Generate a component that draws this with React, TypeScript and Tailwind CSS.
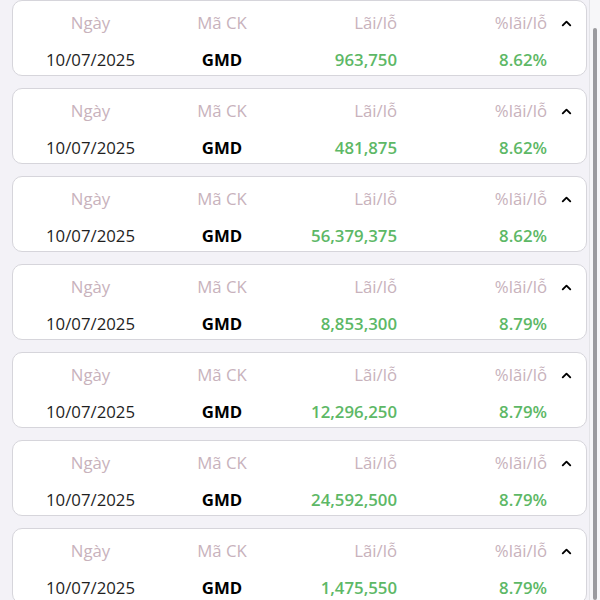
import React from 'react';
import { ChevronUp } from 'lucide-react';

const rows = [
  { date: '10/07/2025', code: 'GMD', pnl: '963,750', pct: '8.62%' },
  { date: '10/07/2025', code: 'GMD', pnl: '481,875', pct: '8.62%' },
  { date: '10/07/2025', code: 'GMD', pnl: '56,379,375', pct: '8.62%' },
  { date: '10/07/2025', code: 'GMD', pnl: '8,853,300', pct: '8.79%' },
  { date: '10/07/2025', code: 'GMD', pnl: '12,296,250', pct: '8.79%' },
  { date: '10/07/2025', code: 'GMD', pnl: '24,592,500', pct: '8.79%' },
  { date: '10/07/2025', code: 'GMD', pnl: '1,475,550', pct: '8.79%' },
];

const App: React.FC = () => {
  return (
    <div
      className="flex h-[600px] w-[600px] overflow-hidden bg-[#f3f2f7]"
      style={{ fontFamily: '"Open Sans", "Noto Sans", sans-serif' }}
    >
      <div className="flex flex-1 flex-col gap-[12px] pl-[12px] pr-[2px]">
        {rows.map((r, i) => (
          <div
            key={i}
            className="flex-shrink-0 rounded-[10px] border border-[#d6d5db] bg-white pt-[10px] pb-[3px] text-[16.8px]"
          >
            {/* header row */}
            <div className="flex h-[24px] items-center text-[#c8b2bc]">
              <div className="w-[155px] text-center">Ngày</div>
              <div className="w-[108px] text-center">Mã CK</div>
              <div className="w-[121px] text-right">Lãi/lỗ</div>
              <div className="w-[150px] text-right">%lãi/lỗ</div>
              <div className="flex flex-1 items-center justify-center">
                <ChevronUp className="h-[15px] w-[15px] text-black" strokeWidth={3} />
              </div>
            </div>
            {/* values row */}
            <div className="mt-[13px] flex h-[24px] items-center">
              <div className="w-[155px] text-center text-[#1f1f1f]">{r.date}</div>
              <div className="w-[108px] text-center font-bold text-black">{r.code}</div>
              <div className="w-[121px] text-right font-semibold text-[#5db866]">{r.pnl}</div>
              <div className="w-[150px] text-right font-semibold text-[#5db866]">{r.pct}</div>
              <div className="flex-1" />
            </div>
          </div>
        ))}
      </div>
      {/* scrollbar */}
      <div className="flex w-[11px] flex-shrink-0 justify-center border-l border-[#e4e4e8] bg-[#f7f7f9] pt-[28px]">
        <div className="h-full w-[4px] rounded-full bg-[#9b9b9f]" />
      </div>
    </div>
  );
};

export default App;
